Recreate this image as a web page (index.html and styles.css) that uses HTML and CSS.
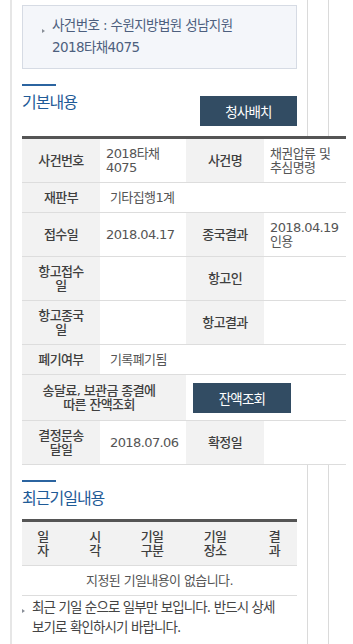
FILE: index.html
```html
<!DOCTYPE html>
<html lang="ko">
<head>
<meta charset="utf-8">
<title>사건 기본내용</title>
<link rel="stylesheet" href="styles.css">
</head>
<body>
<div class="page">
  <div class="panel">
    <div class="case-box">
      <span class="tri"></span>
      <p class="case-text">사건번호 : 수원지방법원 성남지원 2018타채4075</p>
    </div>

    <section class="sec sec-basic">
      <div class="sec-head">
        <h2 class="sec-title">기본내용</h2>
        <button class="btn btn-top" type="button">청사배치</button>
      </div>
      <table class="info">
        <colgroup>
          <col class="c-th"><col class="c-td1"><col class="c-th"><col class="c-td2">
        </colgroup>
        <tr><th>사건번호</th><td>2018타채<br>4075</td><th>사건명</th><td>채권압류 및<br>추심명령</td></tr>
        <tr><th>재판부</th><td class="wide" colspan="3">기타집행1계</td></tr>
        <tr><th>접수일</th><td>2018.04.17</td><th>종국결과</th><td>2018.04.19<br>인용</td></tr>
        <tr><th>항고접수<br>일</th><td></td><th>항고인</th><td></td></tr>
        <tr><th>항고종국<br>일</th><td></td><th>항고결과</th><td></td></tr>
        <tr><th>폐기여부</th><td class="wide" colspan="3">기록폐기됨</td></tr>
        <tr><th class="th-long" colspan="2">송달료, 보관금 종결에<br>따른 잔액조회</th><td class="btn-cell" colspan="2"><button class="btn btn-bal" type="button">잔액조회</button></td></tr>
        <tr><th>결정문송<br>달일</th><td class="wide">2018.07.06</td><th>확정일</th><td></td></tr>
      </table>
    </section>

    <section class="sec sec-dates">
      <div class="sec-head">
        <h2 class="sec-title">최근기일내용</h2>
      </div>
      <table class="dates">
        <colgroup>
          <col class="d1"><col class="d2"><col class="d3"><col class="d4"><col class="d5">
        </colgroup>
        <tr><th>일<br>자</th><th>시<br>각</th><th>기일<br>구분</th><th>기일<br>장소</th><th>결<br>과</th></tr>
        <tr><td class="empty" colspan="5">지정된 기일내용이 없습니다.</td></tr>
      </table>
      <div class="note">
        <span class="tri tri-note"></span>
        <p class="note-text">최근 기일 순으로 일부만 보입니다. 반드시 상세 보기로 확인하시기 바랍니다.</p>
      </div>
    </section>
  </div>
  <div class="side"></div>
</div>
</body>
</html>
```
FILE: styles.css
```css
* { box-sizing: border-box; }
html, body { margin: 0; padding: 0; background: #fff; }
body {
  font-family: "DejaVu Sans", "Noto Sans CJK KR", sans-serif;
  font-size: 13px;
  letter-spacing: -0.6px;
  color: #555;
}
.page { display: flex; min-height: 644px; padding-left: 10px; }
.panel {
  width: 298px;
  flex: none;
  border-left: 2px solid #e6e6e6;
  border-right: 1px solid #dadada;
  padding: 5px 10px 0;
}
.side { width: 21px; flex: none; border-right: 1px solid #dadada; }

/* case box */
.case-box {
  display: flex;
  align-items: flex-start;
  background: #f4f6fa;
  border: 1px solid #d6dbe4;
  padding: 8px 10px 10px 19px;
}
.tri {
  flex: none;
  width: 0; height: 0;
  border-left: 3px solid #8a8f98;
  border-top: 2.5px solid transparent;
  border-bottom: 2.5px solid transparent;
  margin-top: 15px;
  margin-right: 7px;
}
.case-text {
  margin: 0;
  font-size: 13.5px;
  line-height: 22px;
  color: #4d5f7e;
  word-break: keep-all;
}

/* sections */
.sec { margin-top: 15px; }
.sec-head { display: flex; justify-content: space-between; align-items: flex-start; }
.sec-title {
  margin: 0;
  font-size: 16px;
  font-weight: normal;
  letter-spacing: -1px;
  line-height: 20px;
  color: #1f5b97;
}
.sec-title::before {
  content: "";
  display: block;
  width: 34px;
  height: 2px;
  background: #2b64a0;
  margin-bottom: 7px;
}
.btn {
  width: 97px;
  height: 30px;
  border: 0;
  padding: 0;
  background: #324c63;
  color: #fff;
  font-family: inherit;
  font-size: 13.5px;
  letter-spacing: -0.8px;
}
.btn-top { margin-top: 12px; }
.btn-bal { width: 98px; display: block; }

/* info table */
.info, .dates {
  border-collapse: separate;
  border-spacing: 0;
  table-layout: fixed;
  border-top: 3px solid #555;
  margin-top: 10px;
  background: #fff;
  position: relative;
  z-index: 1;
}
.info { width: 324px; }
.c-th { width: 78px; }
.c-td1 { width: 86px; }
.c-td2 { width: 82px; }
.info th, .info td, .dates th, .dates td {
  padding: 7.5px 4px;
  line-height: 14px;
  border-bottom: 1px solid #ddd;
  vertical-align: middle;
}
.info th, .dates th {
  background: #f2f2f2;
  color: #3f3f3f;
  font-weight: 500;
  text-align: center;
}
.info td {
  text-align: left;
  padding-left: 6px;
  background: #fff;
  color: #555;
}
.info td.wide { padding-left: 10px; }
.info .th-long { padding-right: 14px; }
.info td.btn-cell { padding: 7.5px 7px; }

/* dates table */
.dates { width: 275px; }
.d1 { width: 42px; }
.d2 { width: 62px; }
.d3 { width: 52px; }
.d4 { width: 74px; }
.d5 { width: 45px; }
.dates th { padding: 7.5px 2px; }
.dates td.empty { text-align: center; color: #555; background: #fff; }

/* note */
.note { display: flex; align-items: flex-start; margin-top: 1px; }
.tri-note { margin-top: 12px; margin-right: 7px; }
.note-text {
  margin: 0;
  font-size: 13.5px;
  letter-spacing: -0.9px;
  line-height: 20px;
  color: #444;
  word-break: keep-all;
}
```
